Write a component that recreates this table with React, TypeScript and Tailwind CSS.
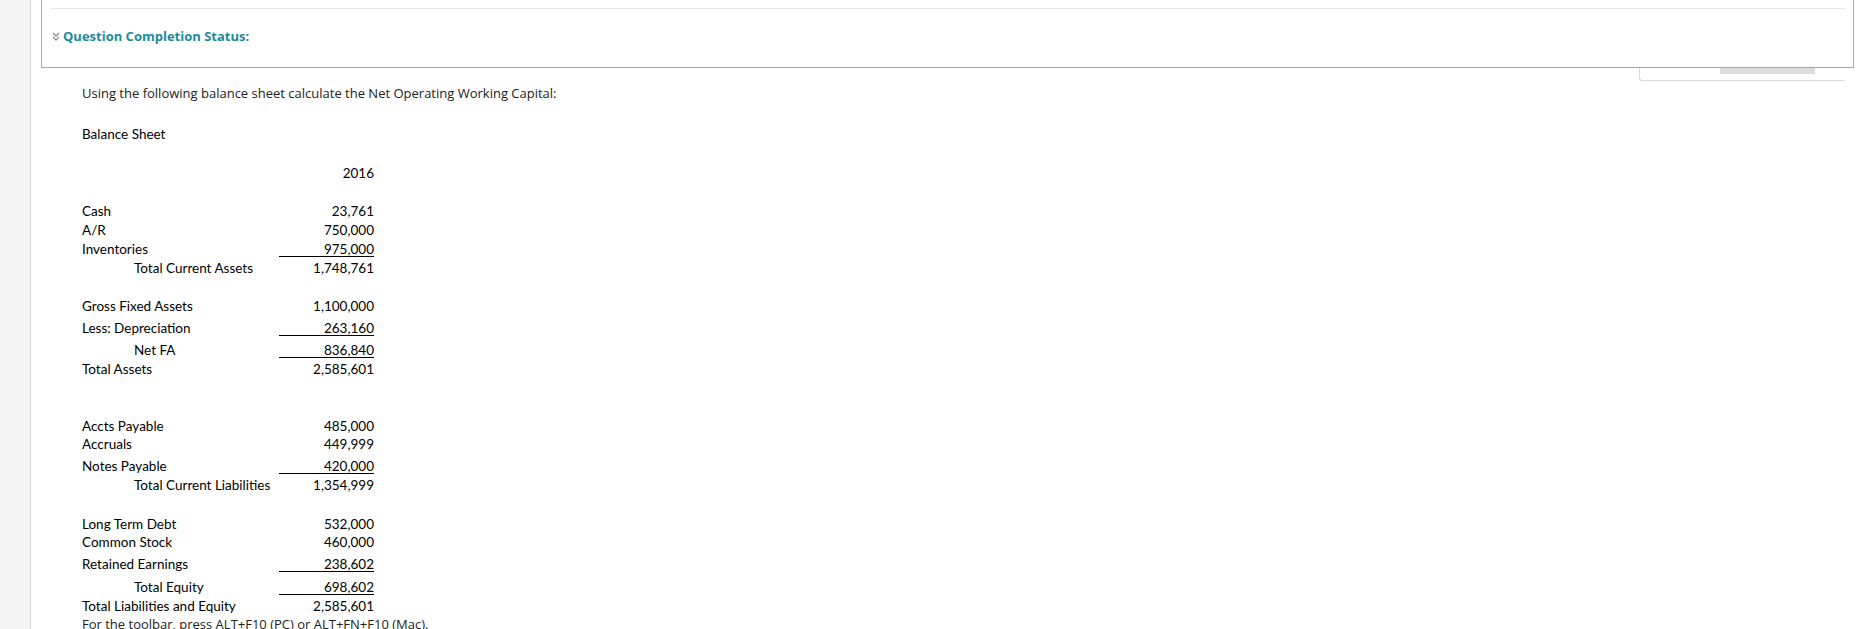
import React from "react";

type Row = {
  label?: string;
  value?: string;
  indent?: boolean;
  under?: boolean;
  h: string;
};

const rows: Row[] = [
  { label: "", value: "2016", h: "h-[38px]" },
  { label: "Cash", value: "23,761", h: "h-[38px]" },
  { label: "A/R", value: "750,000", h: "h-[19px]" },
  { label: "Inventories", value: "975,000", under: true, h: "h-[19px]" },
  { label: "Total Current Assets", value: "1,748,761", indent: true, h: "h-[19px]" },
  { label: "Gross Fixed Assets", value: "1,100,000", h: "h-[38px]" },
  { label: "Less: Depreciation", value: "263,160", under: true, h: "h-[22px]" },
  { label: "Net FA", value: "836,840", indent: true, under: true, h: "h-[22px]" },
  { label: "Total Assets", value: "2,585,601", h: "h-[19px]" },
  { label: "Accts Payable", value: "485,000", h: "h-[57px]" },
  { label: "Accruals", value: "449,999", h: "h-[18px]" },
  { label: "Notes Payable", value: "420,000", under: true, h: "h-[22px]" },
  { label: "Total Current Liabilities", value: "1,354,999", indent: true, h: "h-[19px]" },
  { label: "Long Term Debt", value: "532,000", h: "h-[39px]" },
  { label: "Common Stock", value: "460,000", h: "h-[18px]" },
  { label: "Retained Earnings", value: "238,602", under: true, h: "h-[22px]" },
  { label: "Total Equity", value: "698,602", indent: true, under: true, h: "h-[23px]" },
  { label: "Total Liabilities and Equity", value: "2,585,601", h: "h-[19px]" },
];

function DoubleChevron() {
  return (
    <svg width="8" height="9" viewBox="0 0 8 9" className="shrink-0">
      <path d="M1 1 L4 4 L7 1" fill="none" stroke="#8a8a8a" strokeWidth="1.3" />
      <path d="M1 5 L4 8 L7 5" fill="none" stroke="#8a8a8a" strokeWidth="1.3" />
    </svg>
  );
}

export default function App() {
  return (
    <div className="flex min-h-[629px] w-full overflow-hidden bg-white font-['Open_Sans',sans-serif] text-[#222]">
      <div className="w-[31px] shrink-0 border-r border-[#d2d2d2] bg-[#f5f5f5]" />
      <div className="relative min-w-0 flex-1">
        {/* widget partly hidden behind the status box */}
        <div className="absolute left-[1608px] top-0 h-[81px] w-[206px] rounded-bl-[3px] border-b border-l border-[#d9d9d9] bg-white">
          <div className="absolute left-[80px] top-[67px] h-[7px] w-[95px] bg-[#dcdcdc]" />
        </div>

        <div className="relative z-10 ml-[10px] mr-[9px] h-[68px] border-x border-b border-[#a9a9a9] bg-white pt-[8px]">
          <div className="ml-[9px] mr-[8px] border-t border-[#e3e3e3]" />
          <div className="ml-[10px] mt-[18px] flex items-center gap-[3px]">
            <DoubleChevron />
            <span className="text-[13px] font-bold leading-[18px] text-[#1c8ba0]">
              Question Completion Status:
            </span>
          </div>
        </div>

        <div className="pl-[51px]">
          <p className="mt-[16px] text-[13px] leading-[18px]">
            Using the following balance sheet calculate the Net Operating Working Capital:
          </p>
          <div className="font-['Lato',sans-serif] text-[13.5px] text-black">
            <div className="mt-[23px] leading-[18px]">Balance Sheet</div>
            {rows.map((r, i) => (
              <div key={i} className={`flex items-end ${r.h}`}>
                <div
                  className={`w-[197px] whitespace-nowrap border-b border-transparent leading-[13px] ${r.indent ? "pl-[52px]" : ""}`}
                >
                  {r.label}
                </div>
                <div
                  className={`w-[95px] border-b text-right leading-[13px] ${r.under ? "border-black" : "border-transparent"}`}
                >
                  {r.value}
                </div>
              </div>
            ))}
            <div className="flex h-[18px] items-end">
              <div className="whitespace-nowrap border-b border-transparent font-['Open_Sans',sans-serif] text-[13px] leading-[13px] text-[#222]">
                For the toolbar, press ALT+F10 (PC) or ALT+FN+F10 (Mac).
              </div>
            </div>
          </div>
        </div>
      </div>
    </div>
  );
}
